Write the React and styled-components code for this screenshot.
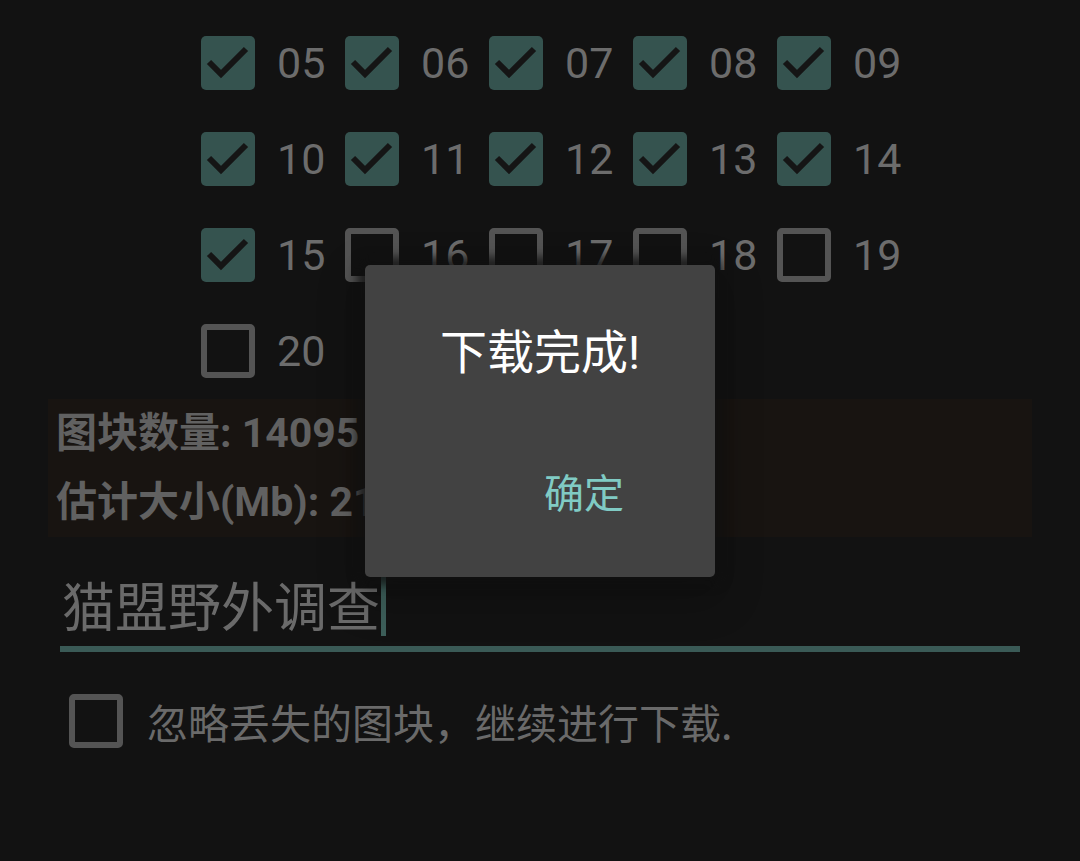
import React from "react";
import styled, { createGlobalStyle } from "styled-components";

const GlobalStyle = createGlobalStyle`
    html, body {
        margin: 0;
        padding: 0;
        background: #121212;
    }
    body {
        font-family: Roboto, "Noto Sans CJK SC", sans-serif;
        width: 1080px;
        height: 861px;
        overflow: hidden;
    }
`

export const Screen = styled.div`
    position: relative;
    width: 1080px;
    height: 861px;
    background: #121212;
    display: flex;
    flex-direction: column;
    padding-top: 15px;
    box-sizing: border-box;
`

export const Grid = styled.div`
    display: grid;
    grid-template-columns: repeat(5, 144px);
    grid-auto-rows: 96px;
    padding-left: 201px;
`

export const Item = styled.div`
    display: flex;
    align-items: center;
    gap: 22px;
`

export const Box = styled.div`
    width: 54px;
    height: 54px;
    box-sizing: border-box;
    border-radius: 5px;
    flex-shrink: 0;
    background: ${p => (p.checked ? "#35534f" : "transparent")};
    border: ${p => (p.checked ? "none" : "6px solid #545454")};
    display: flex;
    align-items: center;
    justify-content: center;
`

export const Label = styled.span`
    font-family: Roboto, sans-serif;
    font-size: 43px;
    color: #6c6c6c;
    line-height: 1;
`

export const Info = styled.div`
    margin: 0 48px;
    height: 138px;
    background: #181411;
    padding-left: 8px;
    display: flex;
    flex-direction: column;
`

export const InfoLine = styled.div`
    font-family: Roboto, "Noto Sans CJK SC", sans-serif;
    font-weight: bold;
    font-size: 41px;
    line-height: 69px;
    color: #616161;
    white-space: nowrap;
`

export const Field = styled.div`
    margin: 30px 60px 0 60px;
    height: 85px;
    border-bottom: 6px solid #3a5a56;
    display: flex;
    align-items: center;
    padding-left: 2px;
    padding-bottom: 4px;
    box-sizing: border-box;
`

export const FieldText = styled.span`
    font-family: "Noto Sans CJK SC", sans-serif;
    font-size: 53px;
    color: #6a6a6a;
    line-height: 1;
`

export const Caret = styled.span`
    display: inline-block;
    width: 5px;
    height: 63px;
    background: #3d5f5a;
    margin-left: 1px;
`

export const Ignore = styled.div`
    display: flex;
    align-items: center;
    gap: 24px;
    margin: 42px 0 0 69px;
`

export const IgnoreText = styled.span`
    font-family: "Noto Sans CJK SC", sans-serif;
    font-size: 41px;
    color: #6a6a6a;
    line-height: 1;
`

export const Dialog = styled.div`
    position: absolute;
    left: 365px;
    top: 265px;
    width: 350px;
    height: 312px;
    background: #424242;
    border-radius: 5px;
    box-shadow: 0 0 10px 8px rgba(16, 16, 16, 0.75), 0 16px 40px 10px rgba(0, 0, 0, 0.2);
    display: flex;
    flex-direction: column;
    box-sizing: border-box;
`

export const Title = styled.div`
    font-family: Roboto, "Noto Sans CJK SC", sans-serif;
    font-size: 47px;
    color: #ffffff;
    text-align: center;
    margin-top: 60px;
    line-height: 56px;
`

export const Actions = styled.div`
    display: flex;
    justify-content: flex-end;
    padding-right: 91px;
    margin-top: 90px;
`

export const Button = styled.span`
    font-family: "Noto Sans CJK SC", sans-serif;
    font-size: 40px;
    color: #80cbc4;
    line-height: 1;
`

function Check() {
    return (
        <svg width="54" height="54" viewBox="0 0 54 54">
            <polyline points="8,26 20,38 45,13" fill="none" stroke="#151515" strokeWidth="6" />
        </svg>
    );
}

function CheckItem({ label, checked }) {
    return (
        <Item>
            <Box checked={checked}>{checked && <Check />}</Box>
            <Label>{label}</Label>
        </Item>
    );
}

const items = [];
for (let i = 5; i <= 20; i++) {
    items.push({ label: String(i).padStart(2, "0"), checked: i <= 15 });
}

export default function App() {
    return (
        <Screen>
            <GlobalStyle />
            <Grid>
                {items.map(it => (
                    <CheckItem key={it.label} label={it.label} checked={it.checked} />
                ))}
            </Grid>
            <Info>
                <InfoLine>图块数量: 14095</InfoLine>
                <InfoLine>估计大小(Mb): 21</InfoLine>
            </Info>
            <Field>
                <FieldText>猫盟野外调查</FieldText>
                <Caret />
            </Field>
            <Ignore>
                <Box />
                <IgnoreText>忽略丢失的图块，继续进行下载.</IgnoreText>
            </Ignore>
            <Dialog>
                <Title>下载完成!</Title>
                <Actions>
                    <Button>确定</Button>
                </Actions>
            </Dialog>
        </Screen>
    );
}
